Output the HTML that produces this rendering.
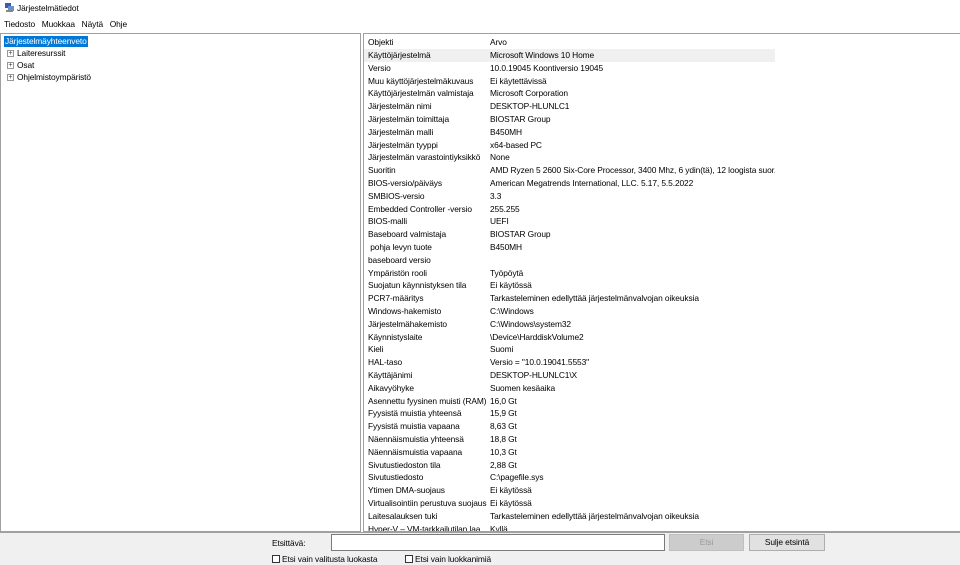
<!DOCTYPE html>
<html><head><meta charset="utf-8"><style>
*{margin:0;padding:0;box-sizing:border-box}
body{width:960px;height:565px;overflow:hidden;background:#fff;font-family:"Liberation Sans",sans-serif;font-size:8.4px;letter-spacing:-0.1px;color:#000;position:relative}
.abs{position:absolute;white-space:nowrap}
#left{position:absolute;left:0;top:33px;width:361px;height:499px;border:1px solid #a0a0a0;background:#fff}
#right{position:absolute;left:363px;top:33px;width:597px;height:499px;border:1px solid #a0a0a0;border-right:none;background:#fff;overflow:hidden}
.row{position:absolute;left:0;height:12.8px;width:411px;line-height:12.8px;white-space:nowrap}
.row span{position:absolute;left:4px;white-space:nowrap;overflow:hidden;width:120px}
.row span+span{left:126px;width:285px}
.sel{background:#f0f0f0}
#bottom{position:absolute;left:0;top:532px;width:960px;height:33px;background:#f0f0f0;border-top:1px solid #a0a0a0}
.cb{display:inline-block;width:8px;height:8px;border:1px solid #333;vertical-align:-1px;margin-right:2px;background:#fff}
.pl{position:absolute;width:7px;height:7px;border:1px solid #999;font-size:7px;line-height:5px;text-align:center;color:#333;background:#fff}
</style></head><body>
<svg class="abs" style="left:5px;top:3px" width="9" height="9"><rect x="0" y="0" width="6" height="5" fill="#3a5da8"/><rect x="3" y="3" width="6" height="5" fill="#6b8fd4"/><rect x="1" y="7" width="7" height="2" fill="#888"/></svg>
<div class="abs" style="left:17px;top:3px">Järjestelmätiedot</div>
<div class="abs" style="left:4px;top:19px">Tiedosto&nbsp;&nbsp;&nbsp;Muokkaa&nbsp;&nbsp;&nbsp;Näytä&nbsp;&nbsp;&nbsp;Ohje</div>
<div id="left">
<div class="abs" style="left:3px;top:2px;background:#0078d7;color:#fff;padding:0 1px;line-height:11px">Järjestelmäyhteenveto</div>
<div class="pl" style="left:6px;top:16px">+</div><div class="abs" style="left:16px;top:14px">Laiteresurssit</div>
<div class="pl" style="left:6px;top:28px">+</div><div class="abs" style="left:16px;top:26px">Osat</div>
<div class="pl" style="left:6px;top:40px">+</div><div class="abs" style="left:16px;top:38px">Ohjelmistoympäristö</div>
</div>
<div id="right">
<div class="row" style="top:2px"><span>Objekti</span><span>Arvo</span></div>
<div id="rows"></div>
</div>
<div id="bottom">
<div class="abs" style="left:272px;top:5px">Etsittävä:</div>
<div class="abs" style="left:331px;top:1px;width:334px;height:17px;background:#fff;border:1px solid #7a7a7a"></div>
<div class="abs" style="left:669px;top:1px;width:75px;height:17px;background:#cccccc;border:1px solid #bfbfbf;color:#999;text-align:center;line-height:15px">Etsi</div>
<div class="abs" style="left:749px;top:1px;width:76px;height:17px;background:#e1e1e1;border:1px solid #adadad;text-align:center;line-height:15px">Sulje etsintä</div>
<div class="abs" style="left:272px;top:21px"><span class="cb"></span>Etsi vain valitusta luokasta</div>
<div class="abs" style="left:405px;top:21px"><span class="cb"></span>Etsi vain luokkanimiä</div>
</div>
<script>
var d=[["Käyttöjärjestelmä","Microsoft Windows 10 Home"],["Versio","10.0.19045 Koontiversio 19045"],["Muu käyttöjärjestelmäkuvaus","Ei käytettävissä"],["Käyttöjärjestelmän valmistaja","Microsoft Corporation"],["Järjestelmän nimi","DESKTOP-HLUNLC1"],["Järjestelmän toimittaja","BIOSTAR Group"],["Järjestelmän malli","B450MH"],["Järjestelmän tyyppi","x64-based PC"],["Järjestelmän varastointiyksikkö","None"],["Suoritin","AMD Ryzen 5 2600 Six-Core Processor, 3400 Mhz, 6 ydin(tä), 12 loogista suor..."],["BIOS-versio/päiväys","American Megatrends International, LLC. 5.17, 5.5.2022"],["SMBIOS-versio","3.3"],["Embedded Controller -versio","255.255"],["BIOS-malli","UEFI"],["Baseboard valmistaja","BIOSTAR Group"],["&nbsp;pohja levyn tuote","B450MH"],["baseboard versio",""],["Ympäristön rooli","Työpöytä"],["Suojatun käynnistyksen tila","Ei käytössä"],["PCR7-määritys","Tarkasteleminen edellyttää järjestelmänvalvojan oikeuksia"],["Windows-hakemisto","C:\\Windows"],["Järjestelmähakemisto","C:\\Windows\\system32"],["Käynnistyslaite","\\Device\\HarddiskVolume2"],["Kieli","Suomi"],["HAL-taso","Versio = \"10.0.19041.5553\""],["Käyttäjänimi","DESKTOP-HLUNLC1\\X"],["Aikavyöhyke","Suomen kesäaika"],["Asennettu fyysinen muisti (RAM)","16,0 Gt"],["Fyysistä muistia yhteensä","15,9 Gt"],["Fyysistä muistia vapaana","8,63 Gt"],["Näennäismuistia yhteensä","18,8 Gt"],["Näennäismuistia vapaana","10,3 Gt"],["Sivutustiedoston tila","2,88 Gt"],["Sivutustiedosto","C:\\pagefile.sys"],["Ytimen DMA-suojaus","Ei käytössä"],["Virtualisointiin perustuva suojaus","Ei käytössä"],["Laitesalauksen tuki","Tarkasteleminen edellyttää järjestelmänvalvojan oikeuksia"],["Hyper-V – VM-tarkkailutilan laa","Kyllä"]];
var h="";for(var i=0;i<d.length;i++){h+='<div class="row'+(i==0?' sel':'')+'" style="top:'+(15+i*12.8)+'px"><span>'+d[i][0]+'</span><span>'+d[i][1]+'</span></div>';}
document.getElementById("rows").innerHTML=h;
</script>
</body></html>
